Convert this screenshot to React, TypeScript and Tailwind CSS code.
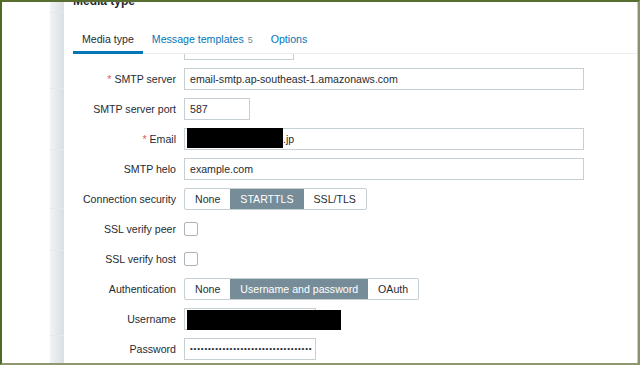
import type { ReactNode } from 'react'

const BORDER = 'border-[#c5cfd4]'

function Field({ label, required, children }: { label: string; required?: boolean; children: ReactNode }) {
  return (
    <div className="flex h-[22px] shrink-0 items-center">
      <div className="w-[120px] shrink-0 pr-[8px] text-right whitespace-nowrap">
        {required && <span className="text-[#e45959]">* </span>}
        {label}
      </div>
      {children}
    </div>
  )
}

function TextBox({ width, children }: { width: string; children?: ReactNode }) {
  return (
    <div className={`flex h-[22px] ${width} items-center border ${BORDER} px-[5px] whitespace-nowrap`}>
      {children}
    </div>
  )
}

function Segmented({ options, selected }: { options: string[]; selected: string }) {
  return (
    <div className={`flex h-[22px] rounded-[2px] border ${BORDER}`}>
      {options.map((o) => (
        <div
          key={o}
          className={
            o === selected
              ? 'flex items-center bg-[#768d99] px-[10px] text-white'
              : 'flex items-center px-[10px]'
          }
        >
          {o}
        </div>
      ))}
    </div>
  )
}

function Checkbox() {
  return <div className="h-[14px] w-[14px] rounded-[2px] border border-[#aab4ba] bg-white" />
}

export default function App() {
  return (
    <div className="flex h-[365px] w-[640px] overflow-hidden border-t-2 border-l-2 border-r-2 border-b-2 border-t-[#586d30] border-l-[#4d6a24] border-r-[#8b9173] border-b-[#8d9870] bg-white font-['Liberation_Sans',Arial,sans-serif] text-[10.6px] leading-[14px] text-[#1f2c33]">
      {/* page behind the dialog */}
      <div className="w-[48px] shrink-0 bg-white" />
      <div className="flex w-[14px] shrink-0 flex-col bg-gradient-to-r from-[#f1f3f4] to-[#dadfe3]">
        <div className="h-[11px] border-b border-[#e6e9eb]" />
        <div className="h-[76px] border-b border-[#e6e9eb]" />
        <div className="h-[61px] border-b border-[#e6e9eb]" />
        <div className="h-[59px] border-b border-[#e6e9eb]" />
        <div className="h-[42px] border-b border-[#e6e9eb]" />
        <div className="h-[85px] border-b border-[#e6e9eb]" />
      </div>

      {/* dialog */}
      <div className="flex min-w-0 flex-1 flex-col overflow-hidden border-r border-[#c9cdc1] bg-white">
        <div className="-mt-[7px] h-[12px] shrink-0 pl-[9px] text-[12px] leading-[12px] font-bold">Media type</div>

        <div className="ml-[9px] flex shrink-0 border-b border-[#ebeef0]">
          <div className="-mb-px border-b-[3px] border-[#0275b8] px-[9px] pt-[25px] pb-[4px]">Media type</div>
          <div className="-mb-px border-b-[3px] border-transparent px-[9px] pt-[25px] pb-[4px] text-[#0275b8]">
            Message templates<span className="ml-[4px] text-[9px] text-[#768d99]">5</span>
          </div>
          <div className="-mb-px border-b-[3px] border-transparent px-[9px] pt-[25px] pb-[4px] text-[#0275b8]">Options</div>
        </div>

        <div className="min-h-0 flex-1 overflow-hidden">
          <div className="-mt-[16px] flex flex-col gap-[8px]">
            <div className="flex h-[22px] shrink-0">
              <div className="w-[120px] shrink-0" />
              <TextBox width="w-[110px]" />
            </div>

            <Field label="SMTP server" required>
              <TextBox width="w-[400px]">email-smtp.ap-southeast-1.amazonaws.com</TextBox>
            </Field>

            <Field label="SMTP server port">
              <TextBox width="w-[66px]">587</TextBox>
            </Field>

            <Field label="Email" required>
              <div className={`flex h-[22px] w-[400px] items-start border ${BORDER} pl-[2px] whitespace-nowrap`}>
                <div className="-mt-px h-[20px] w-[96px] shrink-0 bg-black" />
                <span className="self-center">.jp</span>
              </div>
            </Field>

            <Field label="SMTP helo">
              <TextBox width="w-[400px]">example.com</TextBox>
            </Field>

            <Field label="Connection security">
              <Segmented options={['None', 'STARTTLS', 'SSL/TLS']} selected="STARTTLS" />
            </Field>

            <Field label="SSL verify peer">
              <Checkbox />
            </Field>

            <Field label="SSL verify host">
              <Checkbox />
            </Field>

            <Field label="Authentication">
              <Segmented options={['None', 'Username and password', 'OAuth']} selected="Username and password" />
            </Field>

            <Field label="Username">
              <div className={`flex h-[22px] w-[132px] items-start border ${BORDER} pl-[2px]`}>
                <div className="mt-px h-[20px] w-[154px] shrink-0 bg-black" />
              </div>
            </Field>

            <Field label="Password">
              <TextBox width="w-[132px]">
                <span className="text-[8px] leading-[8px] tracking-[0.8px]">{'•'.repeat(34)}</span>
              </TextBox>
            </Field>
          </div>
        </div>
      </div>
    </div>
  )
}
